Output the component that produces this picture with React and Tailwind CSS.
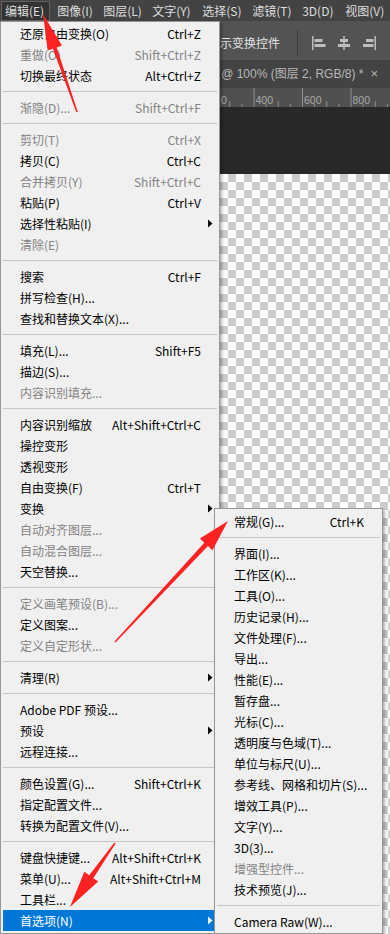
import React from "react";

const FONT = "font-['Noto_Sans_CJK_SC','Noto_Sans',sans-serif]";

const editMenu = [
  { t: "还原自由变换(O)", k: "Ctrl+Z" },
  { t: "重做(O)", k: "Shift+Ctrl+Z", off: true },
  { t: "切换最终状态", k: "Alt+Ctrl+Z" },
  "-",
  { t: "渐隐(D)...", k: "Shift+Ctrl+F", off: true },
  "-",
  { t: "剪切(T)", k: "Ctrl+X", off: true },
  { t: "拷贝(C)", k: "Ctrl+C" },
  { t: "合并拷贝(Y)", k: "Shift+Ctrl+C", off: true },
  { t: "粘贴(P)", k: "Ctrl+V" },
  { t: "选择性粘贴(I)", sub: true },
  { t: "清除(E)", off: true },
  "-",
  { t: "搜索", k: "Ctrl+F" },
  { t: "拼写检查(H)..." },
  { t: "查找和替换文本(X)..." },
  "-",
  { t: "填充(L)...", k: "Shift+F5" },
  { t: "描边(S)..." },
  { t: "内容识别填充...", off: true },
  "-",
  { t: "内容识别缩放", k: "Alt+Shift+Ctrl+C" },
  { t: "操控变形" },
  { t: "透视变形" },
  { t: "自由变换(F)", k: "Ctrl+T" },
  { t: "变换", sub: true },
  { t: "自动对齐图层...", off: true },
  { t: "自动混合图层...", off: true },
  { t: "天空替换..." },
  "-",
  { t: "定义画笔预设(B)...", off: true },
  { t: "定义图案..." },
  { t: "定义自定形状...", off: true },
  "-",
  { t: "清理(R)", sub: true },
  "-",
  { t: "Adobe PDF 预设..." },
  { t: "预设", sub: true },
  { t: "远程连接..." },
  "-",
  { t: "颜色设置(G)...", k: "Shift+Ctrl+K" },
  { t: "指定配置文件..." },
  { t: "转换为配置文件(V)..." },
  "-",
  { t: "键盘快捷键...", k: "Alt+Shift+Ctrl+K" },
  { t: "菜单(U)...", k: "Alt+Shift+Ctrl+M" },
  { t: "工具栏..." },
  { t: "首选项(N)", sub: true, hot: true },
];

const prefsMenu = [
  { t: "常规(G)...", k: "Ctrl+K" },
  "-",
  { t: "界面(I)..." },
  { t: "工作区(K)..." },
  { t: "工具(O)..." },
  { t: "历史记录(H)..." },
  { t: "文件处理(F)..." },
  { t: "导出..." },
  { t: "性能(E)..." },
  { t: "暂存盘..." },
  { t: "光标(C)..." },
  { t: "透明度与色域(T)..." },
  { t: "单位与标尺(U)..." },
  { t: "参考线、网格和切片(S)..." },
  { t: "增效工具(P)..." },
  { t: "文字(Y)..." },
  { t: "3D(3)..." },
  { t: "增强型控件...", off: true },
  { t: "技术预览(J)..." },
  "-",
  { t: "Camera Raw(W)..." },
];

const SubArrow = ({ white }) => (
  <svg width="5" height="9" viewBox="0 0 5 9">
    <path d="M0 0.5 L4.5 4.5 L0 8.5 Z" fill={white ? "#ffffff" : "#000000"} />
  </svg>
);

function MenuList({ items }) {
  return items.map((item, i) => {
    if (item === "-") return <div key={i} className="my-[5px] h-px bg-[#c6c6c6]" />;
    const color = item.hot ? "bg-[#0078d7] text-white" : item.off ? "text-[#838383]" : "text-black";
    return (
      <div key={i} className={`flex h-[21px] items-center leading-[21px] ${color}`}>
        <span className="flex-1 pl-[17px] whitespace-nowrap">{item.t}</span>
        {item.k && <span className="whitespace-nowrap">{item.k}</span>}
        <span className="flex w-[16px] items-center pl-[7px]">{item.sub && <SubArrow white={item.hot} />}</span>
      </div>
    );
  });
}

function arrowPoints(x1, y1, x2, y2, headLen, headW, w0, w1) {
  const len = Math.hypot(x2 - x1, y2 - y1);
  const ux = (x2 - x1) / len;
  const uy = (y2 - y1) / len;
  const nx = -uy;
  const ny = ux;
  const bx = x2 - ux * headLen;
  const by = y2 - uy * headLen;
  const p = [
    [x1 + (nx * w0) / 2, y1 + (ny * w0) / 2],
    [bx + (nx * w1) / 2, by + (ny * w1) / 2],
    [bx + (nx * headW) / 2, by + (ny * headW) / 2],
    [x2, y2],
    [bx - (nx * headW) / 2, by - (ny * headW) / 2],
    [bx - (nx * w1) / 2, by - (ny * w1) / 2],
    [x1 - (nx * w0) / 2, y1 - (ny * w0) / 2],
  ];
  return p.map((q) => q.map((v) => v.toFixed(1)).join(",")).join(" ");
}

function Ruler() {
  const marks = [];
  for (let i = 1; i < 16; i++) {
    const x = 205.5 + i * 12.125;
    if (i % 4 === 0) {
      marks.push(<line key={"m" + i} x1={x} y1="0" x2={x} y2="19" stroke="#8e8e8e" strokeWidth="1" />);
      marks.push(
        <text key={"t" + i} x={x + 1.5} y="16" fill="#aaaaaa" fontSize="10.5" fontFamily="Liberation Sans, sans-serif">
          {200 + (i / 4) * 200}
        </text>
      );
    } else {
      const h = i % 2 === 0 ? 6 : 3;
      marks.push(<line key={"m" + i} x1={x} y1={19 - h} x2={x} y2="19" stroke="#8e8e8e" strokeWidth="1" />);
    }
  }
  return (
    <svg width="170" height="19" viewBox="220 0 170 19" className="block">
      <text x="221" y="16" fill="#aaaaaa" fontSize="10.5" fontFamily="Liberation Sans, sans-serif">0</text>
      {marks}
    </svg>
  );
}

const AlignIcon = ({ kind }) => (
  <svg width="14" height="14" viewBox="0 0 14 14" fill="#bdbdbd">
    {kind === "l" && (
      <>
        <rect x="0" y="0" width="1.5" height="14" />
        <rect x="2.5" y="3" width="8" height="3" />
        <rect x="2.5" y="8" width="11" height="3" />
      </>
    )}
    {kind === "c" && (
      <>
        <rect x="6.25" y="0" width="1.5" height="14" />
        <rect x="3" y="3" width="8" height="3" />
        <rect x="1" y="8" width="12" height="3" />
      </>
    )}
    {kind === "r" && (
      <>
        <rect x="12.5" y="0" width="1.5" height="14" />
        <rect x="4" y="3" width="7.5" height="3" />
        <rect x="1" y="8" width="10.5" height="3" />
      </>
    )}
  </svg>
);

export default function App() {
  return (
    <div className={`relative flex h-[934px] w-[390px] flex-col overflow-hidden bg-[#282828] text-[12px] ${FONT}`}>
      {/* menubar */}
      <div className="flex h-[21px] items-center bg-[#434343] pl-[1px] text-[#dedede]">
        <span className="mr-[7px] flex h-[20px] items-center border border-[#616161] bg-[#333333] pl-[3px] pr-[5px]">编辑(E)</span>
        <span className="w-[46px]">图像(I)</span>
        <span className="w-[49px]">图层(L)</span>
        <span className="w-[50px]">文字(Y)</span>
        <span className="w-[50px]">选择(S)</span>
        <span className="w-[50px]">滤镜(T)</span>
        <span className="w-[43px]">3D(D)</span>
        <span className="whitespace-nowrap">视图(V)</span>
      </div>

      {/* options bar: left part sits under the open menu */}
      <div className="flex h-[39px] items-center bg-[#535353] pl-[220px] pt-[4px] text-[#e2e2e2]">
        <span className="w-[77px] whitespace-nowrap">示变换控件</span>
        <span className="h-[26px] w-px bg-[#3c3c3c]" />
        <div className="ml-[14px] flex gap-[11px]">
          <AlignIcon kind="l" />
          <AlignIcon kind="c" />
          <AlignIcon kind="r" />
        </div>
      </div>

      {/* document tab */}
      <div className="flex h-[28px] items-center justify-end gap-[7px] bg-[#434343] pl-[220px] pr-[12px] font-['Liberation_Sans','Noto_Sans_CJK_SC',sans-serif] text-[#b8b8b8]">
        <span className="whitespace-nowrap">@ 100% (图层 2, RGB/8) *</span>
        <span className="text-[13px]">×</span>
      </div>

      {/* ruler */}
      <div className="h-[19px] bg-[#505050] pl-[220px]">
        <Ruler />
      </div>

      {/* pasteboard */}
      <div className="h-[67px] bg-[#282828]" />

      {/* canvas */}
      <div className="flex-1 bg-[conic-gradient(#cccccc_25%,#ffffff_0_50%,#cccccc_0_75%,#ffffff_0)] bg-[length:16px_16px] bg-[position:220px_0px]" />

      {/* edit menu */}
      <div className="absolute left-0 top-[21px] w-[220px] border border-[#979797] bg-[#f0f0f0] px-[2px] pt-[1px] pb-[2px] shadow-[2px_2px_3px_rgba(0,0,0,0.3)]">
        <MenuList items={editMenu} />
      </div>

      {/* preferences submenu */}
      <div className="absolute left-[214px] top-[508px] w-[169px] border border-[#979797] bg-[#f0f0f0] px-[2px] pt-[2px] pb-[1px] shadow-[2px_2px_3px_rgba(0,0,0,0.3)]">
        <MenuList items={prefsMenu} />
      </div>

      {/* red annotation arrows */}
      <svg className="pointer-events-none absolute left-0 top-0" width="390" height="934" viewBox="0 0 390 934">
        <polygon points={arrowPoints(77, 112, 43, 14, 36, 15, 1.5, 4)} fill="#fe2222" />
        <polygon points={arrowPoints(115, 642, 228, 521, 32, 17, 1.5, 5)} fill="#fe2222" />
        <polygon points={arrowPoints(115, 843, 70, 907, 37, 17, 1.5, 5)} fill="#fe2222" />
      </svg>
    </div>
  );
}
